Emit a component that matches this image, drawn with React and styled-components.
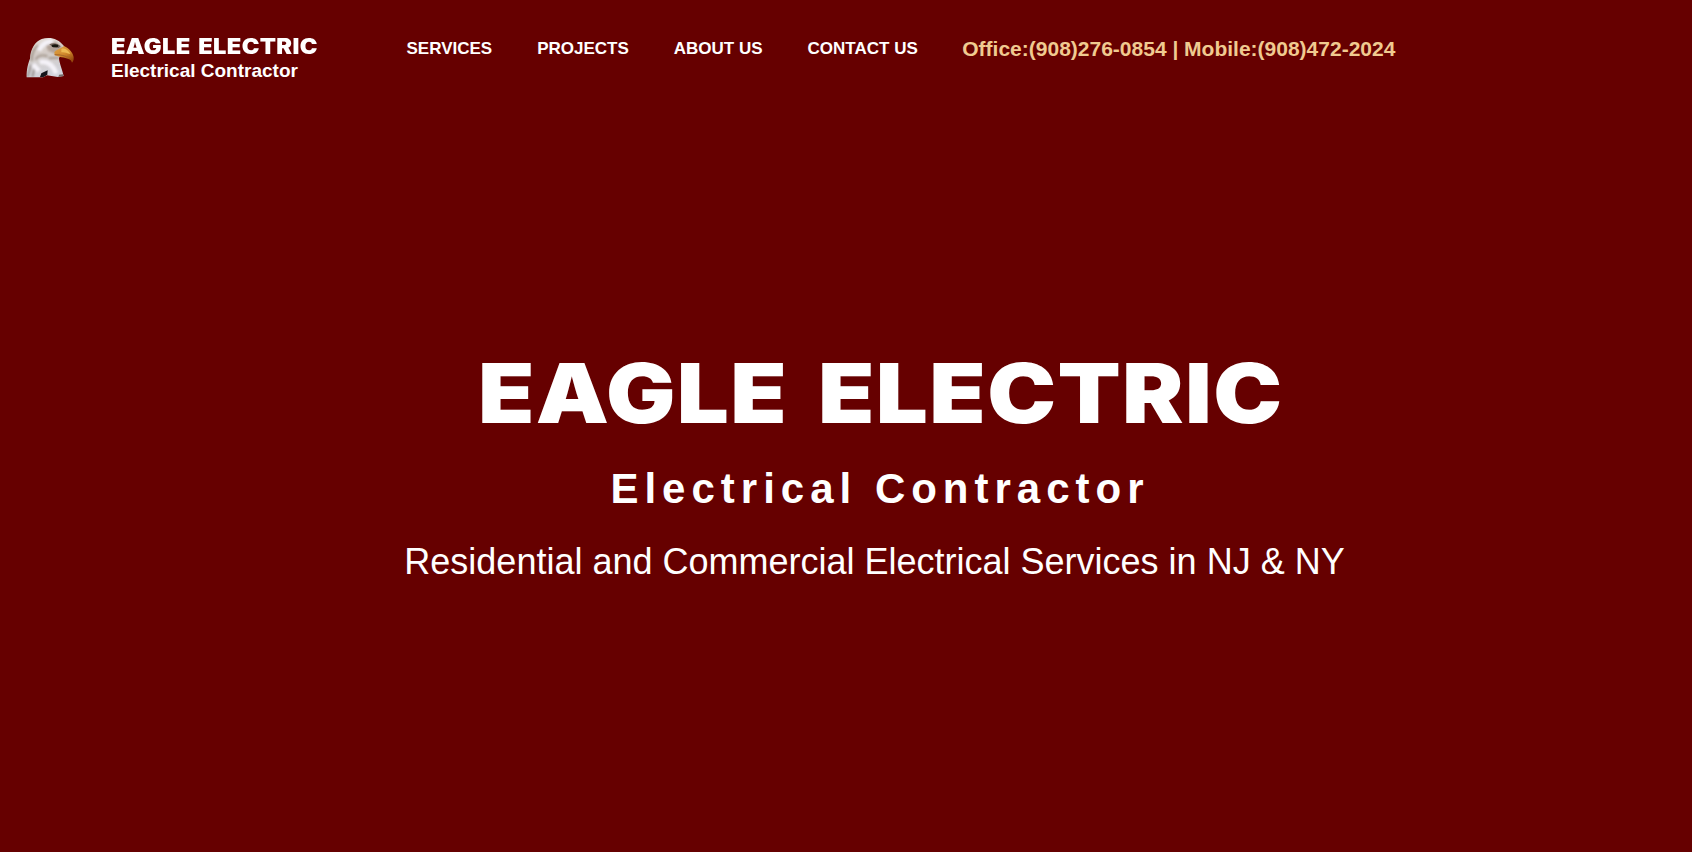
import React from "react";
import styled, { createGlobalStyle, css } from "styled-components";

const GlobalStyle = createGlobalStyle`
  * { box-sizing: border-box; }
  body {
    margin: 0;
    background: #660000;
    color: #fff;
    font-family: "Liberation Sans", Arial, sans-serif;
  }
`;

const Page = styled.div`
  height: 852px;
  overflow: hidden;
  background: #660000;
`;

/* Wide, extra heavy lettering shared by the brand name and the headline. */
const blackWeight = css`
  font-family: Inter, "Arial Black", sans-serif;
  font-weight: 900;
  letter-spacing: 0.015em;
  word-spacing: 0.11em;
  white-space: nowrap;
  transform: scaleX(1.11);
  transform-origin: left center;
`;

const Header = styled.header`
  display: flex;
  align-items: flex-start;
  height: 110px;
  padding-left: 15px;
`;

const EagleLogo = styled.svg`
  flex: none;
  width: 75px;
  height: 65px;
  margin-top: 25px;
`;

const Brand = styled.div`
  flex: none;
  width: 295.5px;
  margin: 33px 0 0 21px;
`;

const BrandName = styled.div`
  ${blackWeight}
  font-size: 21.3px;
  line-height: 26px;
`;

const BrandTagline = styled.div`
  font-size: 19px;
  font-weight: 700;
  line-height: 24px;
`;

const Nav = styled.nav`
  display: flex;
  gap: 45px;
  margin-top: 36px;
`;

const NavLink = styled.a`
  font-size: 17px;
  font-weight: 700;
  line-height: 26px;
  white-space: nowrap;
`;

const Phone = styled.div`
  margin: 36px 0 0 44.5px;
  color: #f0ca90;
  font-size: 21px;
  font-weight: 700;
  line-height: 26px;
  white-space: nowrap;
`;

const Hero = styled.main`
  display: flex;
  flex-direction: column;
  align-items: center;
  width: 1749px;
  padding-top: 233px;
`;

const HeroTitle = styled.h1`
  ${blackWeight}
  align-self: flex-start;
  margin: 0 0 0 477.5px;
  font-size: 83px;
  line-height: 100px;
`;

const HeroSubtitle = styled.h2`
  margin: 21px 0 0;
  padding-left: 11px;
  font-size: 42px;
  line-height: 50px;
  letter-spacing: 6px;
`;

const HeroText = styled.p`
  margin: 26px 0 0;
  font-size: 36px;
  line-height: 44px;
  white-space: nowrap;
`;

const links = ["SERVICES", "PROJECTS", "ABOUT US", "CONTACT US"];

function Eagle() {
  return (
    <EagleLogo viewBox="0 0 225 195" role="img" aria-label="Eagle">
      <defs>
        <linearGradient id="head" x1="0" y1="0" x2="0.2" y2="1">
          <stop offset="0" stopColor="#e6dfda" />
          <stop offset="0.45" stopColor="#d3cbc6" />
          <stop offset="1" stopColor="#d2d4dc" />
        </linearGradient>
        <linearGradient id="beak" x1="0" y1="0" x2="0.6" y2="1">
          <stop offset="0" stopColor="#e0a548" />
          <stop offset="0.6" stopColor="#d0882c" />
          <stop offset="1" stopColor="#984a10" />
        </linearGradient>
        <filter id="soft" x="-10%" y="-10%" width="120%" height="120%">
          <feGaussianBlur stdDeviation="2" />
        </filter>
        <filter id="shade" x="-40%" y="-40%" width="180%" height="180%">
          <feGaussianBlur stdDeviation="3.5" />
        </filter>
        <clipPath id="headShape">
          <path d="M35 157C34 132 40 113 45 101C46 72 60 50 80 42C103 34 130 40 147 63L151 80L132 98C132 112 140 127 146 153L128 156L96 151L84 157Z" />
        </clipPath>
      </defs>
      <g filter="url(#soft)">
        <path fill="url(#head)" d="M35 157C34 132 40 113 45 101C46 72 60 50 80 42C103 34 130 40 147 63L151 80L132 98C132 112 140 127 146 153L128 156L96 151L84 157Z" />
        <g clipPath="url(#headShape)">
          <g filter="url(#shade)">
            <path fill="none" stroke="#a3978c" strokeWidth="6" d="M50 108C49 88 58 70 70 61M62 104C67 92 82 89 97 93M101 100L132 98" />
            <path fill="none" stroke="#8f8783" strokeWidth="5" d="M38 156L48 119M52 156L58 131" />
            <path fill="#b1a298" d="M93 62L122 50L146 72L120 86L99 77Z" />
            <path fill="none" stroke="#f4f2f8" strokeWidth="14" d="M71 76C81 58 96 48 113 49M74 112C98 106 113 120 124 145M54 118L72 138" />
          </g>
          <path fill="#19151a" d="M74 158L79 145L98 136L97 148L87 158Z" />
          <path fill="#77706d" d="M132 149L144 148L148 158L130 158Z" />
        </g>
        <path fill="#75655b" d="M103 58C114 52 127 54 137 64L131 69L113 66Z" />
        <ellipse cx="120" cy="62" rx="10" ry="4.5" fill="#171210" />
        <path fill="url(#beak)" d="M118 82C124 73 136 72 147 63C162 70 174 83 176 96C177 105 174 110 171 113C168 102 156 100 139 97L119 91Z" />
        <path fill="none" stroke="#a5652a" strokeWidth="3" d="M119 89C137 88 151 94 166 98" />
        <path fill="#edb953" d="M139 72C150 66 163 80 166 87C154 84 147 80 139 82Z" />
      </g>
    </EagleLogo>
  );
}

export default function App() {
  return (
    <>
      <GlobalStyle />
      <Page>
        <Header>
          <Eagle />
          <Brand>
            <BrandName>EAGLE ELECTRIC</BrandName>
            <BrandTagline>Electrical Contractor</BrandTagline>
          </Brand>
          <Nav>
            {links.map((label) => (
              <NavLink key={label}>{label}</NavLink>
            ))}
          </Nav>
          <Phone>Office:(908)276-0854 | Mobile:(908)472-2024</Phone>
        </Header>
        <Hero>
          <HeroTitle>EAGLE ELECTRIC</HeroTitle>
          <HeroSubtitle>Electrical Contractor</HeroSubtitle>
          <HeroText>Residential and Commercial Electrical Services in NJ &amp; NY</HeroText>
        </Hero>
      </Page>
    </>
  );
}
